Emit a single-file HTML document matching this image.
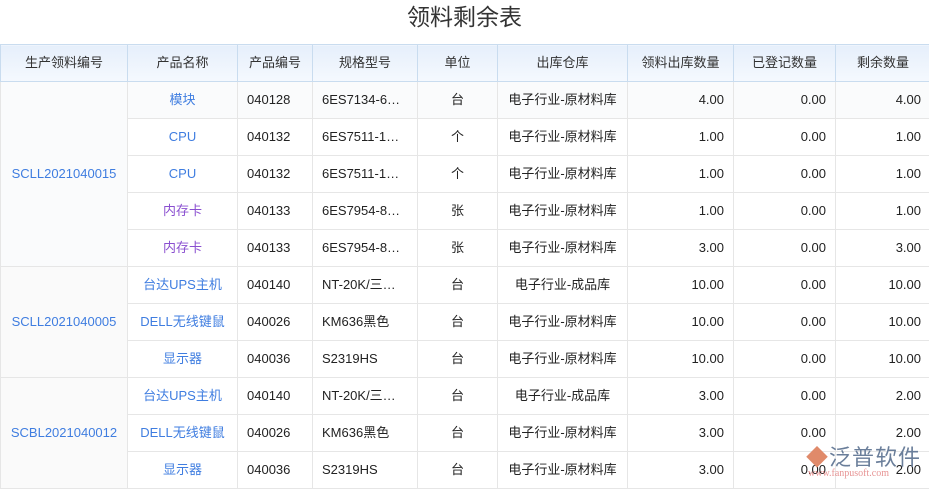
<!DOCTYPE html><html><head><meta charset="utf-8"><style>
body{margin:0;width:929px;height:488px;overflow:hidden;background:#fff;font-family:"Liberation Sans","Noto Sans CJK SC",sans-serif;font-size:13px;color:#222;position:relative}
h1{margin:0;height:45px;line-height:34px;text-align:center;font-size:23px;font-weight:normal;color:#333}
table{border-collapse:collapse;table-layout:fixed;width:930px;position:absolute;top:44px;left:0}
td,th{border:1px solid #e6e6e6;height:36px;padding:0 9px;white-space:nowrap;overflow:hidden;line-height:32px}
th{font-weight:normal;background:linear-gradient(#e6effb,#f5f9fe);border-color:#c9dcef;height:36px;color:#333}
td{text-align:center}
.l{text-align:left}.r{text-align:right}
.b{color:#3f7de0}.p{color:#8a4fd0}
td.m{background:#fafafa;color:#3f7de0}
tr.g td{background:#fafbfc}
.wm{position:absolute;left:806px;top:440px;font-size:22px;color:#6a7e9a;letter-spacing:1px}
.wm2{position:absolute;left:808px;top:468px;font-size:10px;color:#d66;opacity:.7;font-family:"Liberation Serif",serif}
</style></head><body>
<h1>领料剩余表</h1>
<table>
<colgroup><col style="width:127px"><col style="width:110px"><col style="width:75px"><col style="width:105px"><col style="width:80px"><col style="width:130px"><col style="width:106px"><col style="width:102px"><col style="width:95px"></colgroup>
<tr><th>生产领料编号</th><th>产品名称</th><th>产品编号</th><th>规格型号</th><th>单位</th><th>出库仓库</th><th>领料出库数量</th><th>已登记数量</th><th>剩余数量</th></tr>
<tr class="g"><td class="m" rowspan="5">SCLL2021040015</td><td class="b">模块</td><td class="l">040128</td><td class="l">6ES7134-6…</td><td>台</td><td>电子行业-原材料库</td><td class="r">4.00</td><td class="r">0.00</td><td class="r">4.00</td></tr>
<tr><td class="b">CPU</td><td class="l">040132</td><td class="l">6ES7511-1…</td><td>个</td><td>电子行业-原材料库</td><td class="r">1.00</td><td class="r">0.00</td><td class="r">1.00</td></tr>
<tr><td class="b">CPU</td><td class="l">040132</td><td class="l">6ES7511-1…</td><td>个</td><td>电子行业-原材料库</td><td class="r">1.00</td><td class="r">0.00</td><td class="r">1.00</td></tr>
<tr><td class="p">内存卡</td><td class="l">040133</td><td class="l">6ES7954-8…</td><td>张</td><td>电子行业-原材料库</td><td class="r">1.00</td><td class="r">0.00</td><td class="r">1.00</td></tr>
<tr><td class="p">内存卡</td><td class="l">040133</td><td class="l">6ES7954-8…</td><td>张</td><td>电子行业-原材料库</td><td class="r">3.00</td><td class="r">0.00</td><td class="r">3.00</td></tr>
<tr><td class="m" rowspan="3">SCLL2021040005</td><td class="b">台达UPS主机</td><td class="l">040140</td><td class="l">NT-20K/三…</td><td>台</td><td>电子行业-成品库</td><td class="r">10.00</td><td class="r">0.00</td><td class="r">10.00</td></tr>
<tr><td class="b">DELL无线键鼠</td><td class="l">040026</td><td class="l">KM636黑色</td><td>台</td><td>电子行业-原材料库</td><td class="r">10.00</td><td class="r">0.00</td><td class="r">10.00</td></tr>
<tr><td class="b">显示器</td><td class="l">040036</td><td class="l">S2319HS</td><td>台</td><td>电子行业-原材料库</td><td class="r">10.00</td><td class="r">0.00</td><td class="r">10.00</td></tr>
<tr><td class="m" rowspan="3">SCBL2021040012</td><td class="b">台达UPS主机</td><td class="l">040140</td><td class="l">NT-20K/三…</td><td>台</td><td>电子行业-成品库</td><td class="r">3.00</td><td class="r">0.00</td><td class="r">2.00</td></tr>
<tr><td class="b">DELL无线键鼠</td><td class="l">040026</td><td class="l">KM636黑色</td><td>台</td><td>电子行业-原材料库</td><td class="r">3.00</td><td class="r">0.00</td><td class="r">2.00</td></tr>
<tr><td class="b">显示器</td><td class="l">040036</td><td class="l">S2319HS</td><td>台</td><td>电子行业-原材料库</td><td class="r">3.00</td><td class="r">0.00</td><td class="r">2.00</td></tr>
</table>
<div class="wm"><span style="color:#e08a6a">◆</span>泛普软件</div>
<div class="wm2">www.fanpusoft.com</div>
</body></html>
